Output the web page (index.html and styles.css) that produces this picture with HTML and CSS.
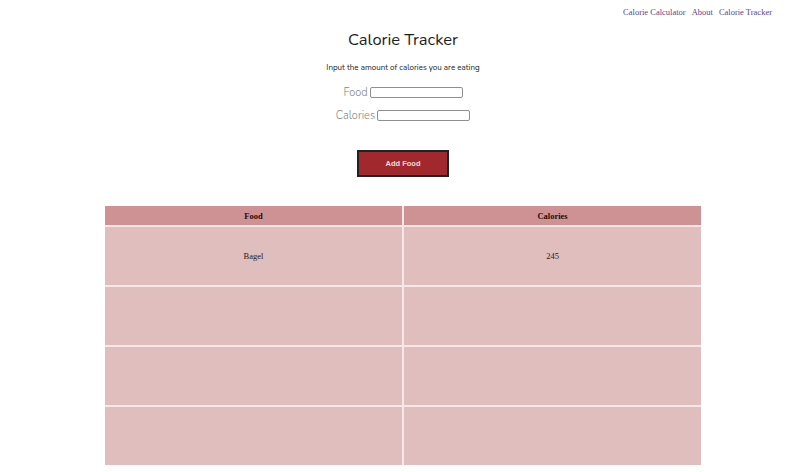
FILE: index.html
```html
<!DOCTYPE html>
<html>
<head>
<meta charset="utf-8">
<link rel="stylesheet" href="styles.css">
</head>
<body>
<nav class="nav">
  <a href="#">Calorie Calculator</a>
  <a href="#">About</a>
  <a href="#">Calorie Tracker</a>
</nav>
<main class="main">
  <h1 class="title">Calorie Tracker</h1>
  <p class="subtitle">Input the amount of calories you are eating</p>
  <div class="field"><label class="label">Food</label><input class="input" type="text"></div>
  <div class="field"><label class="label">Calories</label><input class="input" type="text"></div>
  <button class="btn">Add Food</button>
  <table class="tbl">
    <thead>
      <tr><th>Food</th><th>Calories</th></tr>
    </thead>
    <tbody>
      <tr><td>Bagel</td><td>245</td></tr>
      <tr><td></td><td></td></tr>
      <tr><td></td><td></td></tr>
      <tr><td></td><td></td></tr>
    </tbody>
  </table>
</main>
</body>
</html>
```

FILE: styles.css
```css
html, body { margin: 0; padding: 0; background: #fff; }
body { font-family: "Nunito", "Lato", "Noto Sans", sans-serif; color: #222; }

.nav {
  display: flex;
  justify-content: flex-end;
  gap: 6px;
  padding: 7px 34px 0 0;
  height: 14px;
  font-family: "Liberation Serif", serif;
  font-size: 8.5px;
}
.nav a { color: #5b3f8c; text-decoration: none; }

.main { display: flex; flex-direction: column; align-items: center; }

.title {
  margin: 6px 0 0;
  font-size: 16.5px;
  font-weight: 400;
  line-height: 26px;
  color: #1e1e1e;
}
.subtitle {
  margin: 9px 0 0;
  font-size: 8px;
  line-height: 12px;
  color: #222;
}
.field { display: flex; align-items: center; gap: 2px; margin-top: 11px; height: 15px; }
.field + .field { margin-top: 8px; }
.label { font-size: 11px; font-weight: 300; color: #858585; }
.input {
  width: 93px; height: 11px; box-sizing: border-box;
  border: 1px solid #8f8f8f; border-radius: 2px; padding: 0; margin: 0;
}
.btn {
  margin-top: 27px;
  width: 92px; height: 27px;
  background: #a1282c;
  border: 2px solid #222;
  color: #f3dede;
  font-family: "Liberation Sans", Arial, sans-serif;
  font-weight: 700;
  font-size: 7.5px;
  padding: 0;
}
.tbl {
  margin-top: 29px;
  width: 596px;
  border-collapse: collapse;
  font-family: "Liberation Serif", serif;
  font-size: 8.5px;
  color: #2a1a1a;
}
.tbl th, .tbl td {
  width: 50%;
  text-align: center;
  border: 2px solid #f6e8e8;
}
.tbl tr > :first-child { border-left: none; }
.tbl tr > :last-child { border-right: none; }
.tbl thead th { border-top: none; background: #cf9294; height: 19px; padding: 0; font-weight: 700; color: #1a0d0d; }
.tbl td { background: #e0bebe; height: 58px; padding: 0; }
.tbl tbody tr:last-child td { border-bottom: none; }
```
